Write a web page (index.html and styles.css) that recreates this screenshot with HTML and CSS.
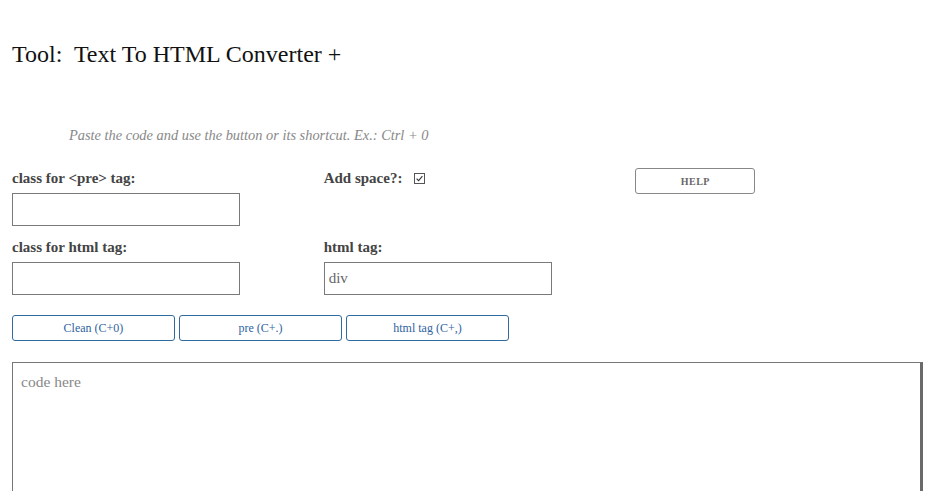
FILE: index.html
```html
<!DOCTYPE html>
<html lang="en">
<head>
<meta charset="utf-8">
<title>Text To HTML Converter +</title>
<link rel="stylesheet" href="styles.css">
</head>
<body>
<main class="page">
  <h1 class="title">Tool:&nbsp; Text To HTML Converter +</h1>
  <p class="hint">Paste the code and use the button or its shortcut. Ex.: Ctrl + 0</p>

  <div class="grid">
    <div class="cell">
      <label class="label" for="preClass">class for &lt;pre&gt; tag:</label>
      <input class="field" id="preClass" type="text">
    </div>
    <div class="cell">
      <div class="label inline">Add space?:
        <span class="check"><svg width="11" height="11" viewBox="0 0 11 11"><rect x="0.5" y="0.5" width="10" height="10" fill="#fff" stroke="#555"/><path d="M2.6 5.6 L4.6 7.6 L8.4 3.2" fill="none" stroke="#333" stroke-width="1.1"/></svg></span>
      </div>
    </div>
    <div class="cell">
      <button class="help" type="button">HELP</button>
    </div>

    <div class="cell row2">
      <label class="label" for="htmlClass">class for html tag:</label>
      <input class="field" id="htmlClass" type="text">
    </div>
    <div class="cell row2">
      <label class="label" for="htmlTag">html tag:</label>
      <input class="field" id="htmlTag" type="text" value="div">
    </div>
    <div class="cell row2"></div>
  </div>

  <div class="actions">
    <button class="action" type="button">Clean (C+0)</button>
    <button class="action" type="button">pre (C+.)</button>
    <button class="action" type="button">html tag (C+,)</button>
  </div>

  <div class="editor-wrap">
    <textarea class="editor" placeholder="code here"></textarea>
  </div>
</main>
</body>
</html>
```

FILE: styles.css
```css
html, body {
  margin: 0;
  padding: 0;
  background: #fff;
  overflow: hidden;
}

.page {
  font-family: "Liberation Serif", "DejaVu Serif", serif;
  color: #333;
}

.title {
  margin: 0;
  padding: 40px 12px 0 12px;
  font-size: 24px;
  font-weight: normal;
  line-height: 28px;
  color: #111;
}

.hint {
  margin: 0;
  padding: 58px 0 0 69px;
  font-style: italic;
  font-size: 14.4px;
  line-height: 18px;
  color: #888;
}

.grid {
  display: grid;
  grid-template-columns: repeat(3, 1fr);
  margin-top: 24px;
}

.cell {
  padding-left: 12px;
  display: flex;
  flex-direction: column;
  align-items: flex-start;
}

.cell.row2 {
  margin-top: 11px;
}

.label {
  display: block;
  font-size: 15px;
  font-weight: bold;
  line-height: 20px;
  color: #444;
  margin-bottom: 5px;
}

.label.inline {
  display: flex;
  align-items: center;
  gap: 12px;
}

.check {
  display: inline-flex;
  width: 11px;
  height: 11px;
}

.field {
  box-sizing: border-box;
  width: 228px;
  height: 33px;
  margin: 0;
  border: 1px solid #7a7a7a;
  border-radius: 0;
  padding: 0 4px;
  font-family: "Liberation Serif", serif;
  font-size: 15px;
  color: #666;
  background: #fff;
  outline: none;
}

.help {
  box-sizing: border-box;
  width: 120px;
  height: 26px;
  margin: 0;
  border: 1px solid #888;
  border-radius: 3px;
  background: #fff;
  font-family: "Liberation Serif", serif;
  font-size: 10px;
  font-weight: bold;
  letter-spacing: 0.5px;
  color: #666;
}

.actions {
  display: flex;
  gap: 4px;
  padding: 20px 0 0 12px;
}

.action {
  box-sizing: border-box;
  width: 163px;
  height: 26px;
  margin: 0;
  border: 1px solid #2f6b9f;
  border-radius: 3px;
  background: #fff;
  font-family: "Liberation Serif", serif;
  font-size: 12px;
  font-weight: normal;
  color: #2f63a0;
}

.editor-wrap {
  padding: 21px 12px 0 12px;
}

.editor {
  box-sizing: border-box;
  display: block;
  width: 100%;
  height: 200px;
  margin: 0;
  border: 1px solid #777;
  border-right: 3px solid #6a6a6a;
  border-radius: 0;
  padding: 10px 8px;
  font-family: "Liberation Serif", serif;
  font-size: 15.5px;
  color: #333;
  resize: none;
  outline: none;
}

.editor::placeholder {
  color: #888;
}
```
